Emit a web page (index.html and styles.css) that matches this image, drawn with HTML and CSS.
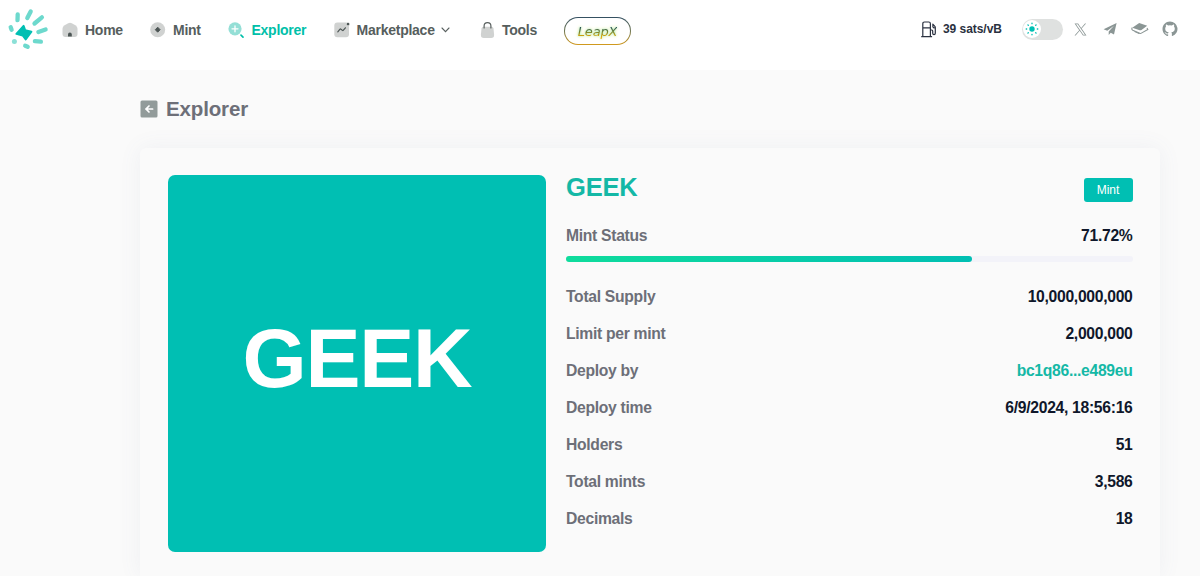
FILE: index.html
```html
<!DOCTYPE html>
<html lang="en">
<head>
    <meta charset="UTF-8">
    <meta name="viewport" content="width=device-width, initial-scale=1.0">
    <title>Explorer</title>
    <link rel="stylesheet" href="styles.css">
</head>
<body>
    <header class="header">
        <a class="logo" href="#">
            <svg width="44" height="48" viewBox="0 0 44 48">
                <g stroke="#6dd9cd" stroke-width="4.300" stroke-linecap="round">
                    <path d="M11.700 10.400l-.2 5.800M24.700 7.500l-3.400 6.600M35.900 13.300l-7.400 6.200M39.600 25.500l-7.200 2.600M28.900 37.200l6 .500M19.200 41.700l2.500 1.100M4.700 23.300l.9 2.400"/>
                </g>
                <circle cx="8.400" cy="37.500" r="2.500" fill="#8be0d7"/>
                <path d="M17.600 21.900l1.500 4.300 6.300 1.500-5.700 7.800-3-4-6.300-1.600z" fill="#00bfb3" stroke="#00bfb3" stroke-width="2" stroke-linejoin="round"/>
            </svg>
        </a>
        <nav class="nav">
            <a class="nav-item home" href="#">
                <svg width="16" height="16" viewBox="0 0 16 16">
                    <path d="M6.200 1.200Q8 .200 9.800 1.200l4 2.400Q15.500 4.800 15.500 6.800v5.200q0 3-3 3h-9q-3 0-3-3V6.800Q.5 4.800 2.200 3.600z" fill="#d0d2d1"/>
                    <path d="M6 14.500v-2a1.900 1.900 0 0 1 3.800 0v2z" fill="#4c5554"/>
                </svg>
                <span>Home</span>
            </a>
            <a class="nav-item mint" href="#">
                <svg width="16" height="16" viewBox="0 0 16 16">
                    <circle cx="7.700" cy="7.700" r="7.500" fill="#d0d2d1"/>
                    <path d="M7.700 5.200l2.400 2.500-2.400 2.500-2.400-2.500z" fill="#4c5554" stroke="#4c5554" stroke-linejoin="round"/>
                </svg>
                <span>Mint</span>
            </a>
            <a class="nav-item explorer active" href="#">
                <svg width="17" height="17" viewBox="0 0 17 17">
                    <circle cx="7" cy="6.800" r="6.600" fill="#94dfd6"/>
                    <path d="M7 3.800v6M4 6.800h6" stroke="#fff" stroke-width="1.300" stroke-linecap="round"/>
                    <path d="M13 13.200l2 1.900" stroke="#00bfa9" stroke-width="1.700" stroke-linecap="round"/>
                </svg>
                <span>Explorer</span>
            </a>
            <a class="nav-item market" href="#">
                <svg width="16" height="16" viewBox="0 0 16 16">
                    <rect x=".300" y=".500" width="14.700" height="14.700" rx="3" fill="#d0d2d1"/>
                    <path d="M3.800 9.800l2.200-2.600q.5-.5 1 0l1.400 1.200q.5.400 1-.2l2-2.400" fill="none" stroke="#4c5554" stroke-width="1.200" stroke-linecap="round"/>
                    <circle cx="14" cy="2.100" r="1.700" fill="#4c5554" stroke="#fff" stroke-width=".500"/>
                </svg>
                <span>Marketplace</span>
                <svg class="chevron" width="9" height="6" viewBox="0 0 9 6">
                    <path d="M1 1l3.500 3.600L8 1" fill="none" stroke="#59605f" stroke-width="1.100" stroke-linecap="round"/>
                </svg>
            </a>
            <a class="nav-item tools" href="#">
                <svg width="15" height="17" viewBox="0 0 15 17">
                    <path d="M3.500 4.700h8q1.700 0 2 1.800l.6 6.200q.2 3.300-3 3.300H3.900q-3.200 0-3-3.300l.6-6.200Q1.800 4.700 3.500 4.700z" fill="#d0d2d1"/>
                    <path d="M4.100 6V4a3.400 3.400 0 0 1 6.800 0v2" fill="none" stroke="#59605f" stroke-width="1.200" stroke-linecap="round"/>
                </svg>
                <span>Tools</span>
            </a>
            <a class="leapx" href="#"><span>LeapX</span></a>
        </nav>
        <div class="right">
            <div class="gas">
                <svg width="16" height="17" viewBox="0 0 16 17" fill="none" stroke="#2a3140" stroke-width="1.200" stroke-linecap="round" stroke-linejoin="round">
                    <path d="M1.800 15.500V2.800Q1.800 1 3.500 1h4.200q1.700 0 1.700 1.800v12.700M.7 15.700h9.900M1.800 6.800h7.600M9.400 9h1.300q1 0 1 1v2.300q0 1.400 1.300 1.400t1.300-1.400V6.600q0-.8-.6-1.400L11.800 3.200M11.900 3.500v2.300q.2 1 2.300 1.200"/>
                </svg>
                <span>39 sats/vB</span>
            </div>
            <div class="toggle">
                <div class="knob">
                    <svg width="14" height="14" viewBox="0 0 14 14">
                        <circle cx="7" cy="7" r="2.700" fill="#00bfb3"/>
                        <g stroke="#00bfb3" stroke-width="1.300" stroke-linecap="round">
                            <path d="M7 1.200v.5M7 12.300v.5M1.200 7h.5M12.300 7h.5M2.900 2.900l.4.400M10.700 10.700l.4.400M2.900 11.100l.4-.4M10.700 3.300l.4-.4"/>
                        </g>
                    </svg>
                </div>
            </div>
            <div class="social">
                <svg width="13" height="13" viewBox="0 0 24 24" fill="#8b9695">
                    <path d="M14.100 10.300L22.300 1h-2l-7.100 8.100L7.600 1H1l8.600 12.300L1 23h2l7.500-8.600 6 8.600H23zM3.700 2.500h3l13.600 19h-3z"/>
                </svg>
                <svg width="14" height="14" viewBox="0 0 14 14" fill="#8b9695">
                    <path d="M13.600 1L.6 7.300l3.700 1.500L11 3.700 5.700 9.400v3.700l2-2.400 3.300 1.700z"/>
                </svg>
                <svg width="18" height="14" viewBox="0 0 18 14" fill="#8b9695">
                    <path d="M8.200 1l8 2.700-5.700 4.200q-.8.600-1.800.3L1.300 5.700z"/>
                    <path d="M1.300 5.700q-1.200 1.500.5 2.500l6.900 3.100q.9.400 1.700-.2l6.400-3.600-.8-1.400" fill="none" stroke="#8b9695" stroke-width="1.100"/>
                    <path d="M3.500 8.900v1.200l4.400 2 1-.8z"/>
                </svg>
                <svg width="16" height="16" viewBox="0 0 16 16" fill="#8b9695">
                    <path d="M8 .5C3.860.5.500 3.860.500 8c0 3.300 2.150 6.100 5.130 7.100.37.070.5-.16.500-.36v-1.400c-2.090.45-2.530-.88-2.530-.88-.34-.87-.83-1.100-.83-1.100-.68-.46.050-.45.050-.45.750.050 1.150.77 1.150.77.670 1.150 1.760.82 2.190.62.070-.48.260-.81.470-1-1.660-.19-3.410-.83-3.410-3.700 0-.82.290-1.490.77-2.010-.08-.19-.33-.95.070-1.980 0 0 .63-.2 2.060.77a7.200 7.200 0 0 1 3.760 0c1.430-.97 2.060-.77 2.060-.77.400 1.030.150 1.790.070 1.980.480.520.770 1.190.770 2.010 0 2.880-1.750 3.510-3.420 3.700.270.230.510.690.510 1.390v2.060c0 .2.130.430.510.360A7.500 7.500 0 0 0 8 .5z"/>
                </svg>
            </div>
        </div>
    </header>

    <main class="container">
        <div class="page-title">
            <svg width="18" height="18" viewBox="0 0 18 18">
                <rect x=".500" y=".500" width="17" height="17" rx="1.500" fill="#929b9a"/>
                <path d="M12.600 9H6M9 6L6 9l3 3" fill="none" stroke="#fff" stroke-width="1.700" stroke-linecap="round"/>
            </svg>
            <h1>Explorer</h1>
        </div>
        <section class="card">
            <div class="cover">GEEK</div>
            <div class="info">
                <div class="info-head">
                    <h2>GEEK</h2>
                    <button class="mint-btn">Mint</button>
                </div>
                <div class="row status"><span>Mint Status</span><b>71.72%</b></div>
                <div class="progress"><div class="bar" style="width: 71.72%"></div></div>
                <div class="row"><span>Total Supply</span><b>10,000,000,000</b></div>
                <div class="row"><span>Limit per mint</span><b>2,000,000</b></div>
                <div class="row"><span>Deploy by</span><b class="link">bc1q86...e489eu</b></div>
                <div class="row"><span>Deploy time</span><b>6/9/2024, 18:56:16</b></div>
                <div class="row"><span>Holders</span><b>51</b></div>
                <div class="row"><span>Total mints</span><b>3,586</b></div>
                <div class="row"><span>Decimals</span><b>18</b></div>
            </div>
        </section>
    </main>
</body>
</html>
```

FILE: styles.css
```css
* {
    box-sizing: border-box;
}
body {
    margin: 0;
    background-color: #fafafa;
    font-family: "Liberation Sans", Arial, sans-serif;
}
a {
    color: inherit;
    text-decoration: none;
}
svg {
    display: block;
    flex-shrink: 0;
}
.header {
    display: flex;
    height: 70px;
    padding: 0 15px 0 6px;
    background-color: #fff;
}
.logo {
    width: 56px;
    padding-top: 4px;
}
.nav {
    display: flex;
    height: 60px;
    align-items: center;
    font-size: 14px;
    font-weight: bold;
    letter-spacing: -0.25px;
    color: #565e5d;
}
.nav-item {
    display: flex;
    align-items: center;
    gap: 7px;
}
.home {
    width: 88px;
}
.mint {
    width: 77.5px;
}
.explorer {
    width: 106px;
}
.market {
    width: 146.5px;
}
.market .chevron {
    margin-left: -1px;
}
.tools {
    width: 84px;
}
.active {
    color: #00bfa9;
}
.leapx {
    display: flex;
    width: 67px;
    height: 28px;
    margin-top: 2px;
    align-items: center;
    justify-content: center;
    border: 1px solid transparent;
    border-radius: 14px;
    background: linear-gradient(#fff, #fff) padding-box, linear-gradient(#334f62, #6e7550 50%, #d39a1c) border-box;
}
.leapx span {
    font: italic 13px "DejaVu Sans", sans-serif;
    letter-spacing: -0.2px;
    background: linear-gradient(#23505b 20%, #6f8030 50%, #e6a800 85%);
    -webkit-background-clip: text;
    background-clip: text;
    color: transparent;
    filter: drop-shadow(0 0 1px #8ff0e0) drop-shadow(0 0 1.5px #fff3a0);
}
.right {
    display: flex;
    height: 58px;
    margin-left: auto;
    align-items: center;
}
.gas {
    display: flex;
    align-items: center;
    gap: 6px;
    width: 101px;
    font-size: 12px;
    font-weight: bold;
    letter-spacing: -0.05px;
    color: #2a3140;
}
.toggle {
    width: 41px;
    height: 21px;
    padding: 1.5px 1px;
    border-radius: 11px;
    background-color: #dfe1e0;
}
.knob {
    display: flex;
    width: 18px;
    height: 18px;
    align-items: center;
    justify-content: center;
    border-radius: 50%;
    background-color: #fff;
}
.social {
    display: grid;
    grid-template-columns: repeat(4, 30px);
    align-items: center;
    justify-items: center;
    margin-left: 2px;
}
.container {
    width: 1020px;
    margin: 0 0 0 140px;
}
.page-title {
    display: flex;
    align-items: center;
    gap: 8px;
    height: 78px;
}
.page-title h1 {
    margin: 0;
    font-size: 20.5px;
    letter-spacing: -0.15px;
    color: #6d6f78;
}
.card {
    display: flex;
    gap: 20px;
    height: 428px;
    padding: 27px 27.5px 0 28px;
    border-radius: 6px 6px 0 0;
    box-shadow: 0 0 22px rgba(100, 110, 150, 0.08);
}
.cover {
    display: flex;
    width: 378px;
    height: 377px;
    padding-bottom: 10px;
    align-items: center;
    justify-content: center;
    border-radius: 7px;
    background-color: #00bfb3;
    color: #fff;
    font-size: 82.5px;
    font-weight: bold;
    letter-spacing: -1.2px;
}
.info {
    flex: 1;
}
.info-head {
    display: flex;
    justify-content: space-between;
    height: 46px;
}
.info-head h2 {
    margin: 0;
    font-size: 25.5px;
    line-height: 25px;
    letter-spacing: -0.2px;
    color: #14b8a6;
}
.mint-btn {
    width: 49px;
    height: 24px;
    margin-top: 3px;
    padding: 0;
    border: 0;
    border-radius: 3px;
    background-color: #00bfb3;
    color: #fff;
    font: 12px "Liberation Sans", Arial, sans-serif;
}
.row {
    display: flex;
    justify-content: space-between;
    align-items: center;
    height: 37.1px;
    font-size: 15.7px;
    font-weight: bold;
    letter-spacing: -0.3px;
    color: #6d6f78;
}
.row b {
    color: #0f172a;
}
.row .link {
    color: #14b8a6;
}
.status {
    height: 30px;
}
.progress {
    height: 6.5px;
    margin: 4.5px 0 16px;
    border-radius: 4px;
    background-color: #f3f3f9;
}
.bar {
    height: 100%;
    border-radius: 4px;
    background: linear-gradient(to right, #0fdc9c, #00bfb3);
}
```
